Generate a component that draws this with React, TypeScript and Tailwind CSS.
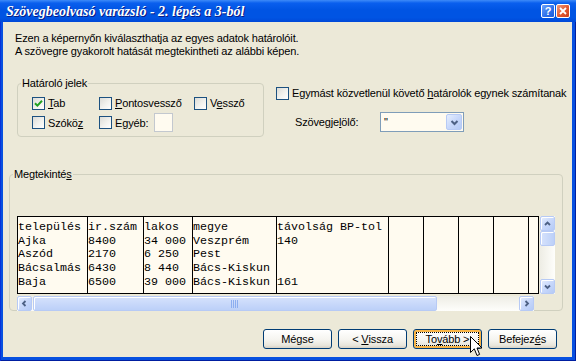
import React from "react";

const ui = "font-['Liberation_Sans',Arial,sans-serif] text-[11px] tracking-[-0.15px] text-black";

const U = ({ c }: { c: string }) => <span className="underline underline-offset-[1px]">{c}</span>;

const Box = ({ on }: { on?: boolean }) => (
  <span className="flex h-[13px] w-[13px] shrink-0 items-center justify-center border border-[#1C5180] bg-[linear-gradient(135deg,#DCDCD7_0%,#F2F2EE_55%,#FFFFFF_100%)]">
    {on && (
      <svg width="9" height="9" viewBox="0 0 9 9">
        <path d="M1 4.2 L3.4 6.6 L8 1.8" stroke="#21A121" strokeWidth="2" fill="none" />
      </svg>
    )}
  </span>
);

const arrows: Record<string, string> = {
  up: "M1 5 L3.5 2.5 L6 5",
  down: "M1 2.5 L3.5 5 L6 2.5",
  left: "M4.5 1 L2 3.5 L4.5 6",
  right: "M2.5 1 L5 3.5 L2.5 6",
};

const SBtn = ({ dir }: { dir: string }) => (
  <span className="flex h-[15px] w-[15px] shrink-0 items-center justify-center rounded-[2px] border border-[#B7CAF5] bg-[linear-gradient(135deg,#E6EEFD_0%,#C8D8FB_50%,#B4CAF6_100%)] shadow-[inset_1px_1px_0_#FFFFFF]">
    <svg width="7" height="7" viewBox="0 0 7 7">
      <path d={arrows[dir]} stroke="#4D6185" strokeWidth="1.8" fill="none" />
    </svg>
  </span>
);

const Grip = () => (
  <svg width="8" height="8" viewBox="0 0 8 8">
    {[0, 2, 4, 6].map((p) => (
      <line key={p} x1={p + 0.5} y1="0" x2={p + 0.5} y2="8" stroke="#8CAEF0" />
    ))}
  </svg>
);

const Btn = ({ children, hot }: { children: React.ReactNode; hot?: boolean }) => (
  <button
    className={`flex h-[20px] w-[69px] rounded-[3px] border border-[#003C74] bg-[linear-gradient(to_bottom,#FFFFFF_0%,#F5F4EF_55%,#E9E6DC_85%,#D7D1C5_100%)] p-[2px] ${ui} ${
      hot ? "shadow-[inset_0_0_0_2px_#F8B548]" : ""
    }`}
  >
    <span
      className={`flex flex-1 items-center justify-center whitespace-pre border border-dotted ${
        hot ? "border-black" : "border-transparent"
      }`}
    >
      {children}
    </span>
  </button>
);

const cols: { w: string; lines: string[] }[] = [
  { w: "w-[70px] border-r", lines: ["település", "Ajka", "Aszód", "Bácsalmás", "Baja"] },
  { w: "w-[56px] border-r", lines: ["ir.szám", "8400", "2170", "6430", "6500"] },
  { w: "w-[49px] border-r", lines: ["lakos", "34 000", "6 250", "8 440", "39 000"] },
  { w: "w-[84px] border-r", lines: ["megye", "Veszprém", "Pest", "Bács-Kiskun", "Bács-Kiskun"] },
  { w: "w-[112px] border-r", lines: ["távolság BP-tol", "140", "", "", "161"] },
  { w: "w-[35px] border-r", lines: [] },
  { w: "w-[35px] border-r", lines: [] },
  { w: "w-[35px] border-r", lines: [] },
  { w: "w-[35px] border-r", lines: [] },
  { w: "w-[9px]", lines: [] },
];

export default function App() {
  return (
    <div className="relative flex h-[361px] w-[576px] flex-col overflow-hidden bg-[#0750E0] shadow-[inset_1px_0_0_#0831D9,inset_-1px_0_0_#001EA0,inset_0_-1px_0_#001EA0]">
      {/* title bar */}
      <div className="flex h-[22px] shrink-0 items-center bg-[linear-gradient(to_bottom,#3E8BF8_0%,#0A5FEE_14%,#0054E3_45%,#0054E3_80%,#0048D8_100%)] pl-[6px] pr-[6px]">
        <span className="flex-1 font-['Liberation_Serif',serif] text-[14px] font-bold italic text-white [text-shadow:1px_1px_#0A1C83]">
          Szövegbeolvasó varázsló - 2. lépés a 3-ból
        </span>
        <span className="flex h-[14px] w-[14px] items-center justify-center rounded-[2px] border border-white bg-[linear-gradient(135deg,#6EA3FB_0%,#2C6FEA_60%,#1D5BD8_100%)] font-['Liberation_Sans',sans-serif] text-[11px] font-bold leading-none text-white">
          ?
        </span>
        <span className="ml-[1px] flex h-[14px] w-[14px] items-center justify-center rounded-[2px] border border-white bg-[linear-gradient(135deg,#F09A7C_0%,#E2582F_55%,#C8401E_100%)]">
          <svg width="8" height="8" viewBox="0 0 8 8">
            <path d="M1 1 L7 7 M7 1 L1 7" stroke="#FFFFFF" strokeWidth="1.8" />
          </svg>
        </span>
      </div>

      {/* body */}
      <div className="mb-[4px] ml-[3px] mr-[4px] flex flex-1 flex-col bg-[#ECE9D8]">
        <div className={`ml-[12px] mt-[10px] leading-[13px] ${ui}`}>
          <div>Ezen a képernyőn kiválaszthatja az egyes adatok határolóit.</div>
          <div>A szövegre gyakorolt hatását megtekintheti az alábbi képen.</div>
        </div>

        <div className="mt-[19px] flex items-start">
          <fieldset className="ml-[14px] h-[60px] w-[247px] rounded-[4px] border border-[#D0D0BF] px-[3px]">
            <legend className={`px-[1px] leading-[13px] ${ui} text-[#0046D5]`}>Határoló jelek</legend>
            <div className={`ml-[11px] mt-[7px] flex h-[13px] items-center ${ui}`}>
              <label className="flex w-[67px] items-center gap-[3px]">
                <Box on />
                <span>
                  <U c="T" />
                  ab
                </span>
              </label>
              <label className="flex w-[95px] items-center gap-[3px]">
                <Box />
                <span>
                  <U c="P" />
                  ontosvessző
                </span>
              </label>
              <label className="flex items-center gap-[3px]">
                <Box />
                <span>
                  V<U c="e" />
                  ssző
                </span>
              </label>
            </div>
            <div className={`ml-[11px] mt-[3px] flex h-[19px] items-end ${ui}`}>
              <label className="mb-[1px] flex w-[67px] items-center gap-[3px]">
                <Box />
                <span>
                  Szókö
                  <U c="z" />
                </span>
              </label>
              <label className="flex items-end gap-[3px]">
                <span className="mb-[1px] flex items-center gap-[3px]">
                  <Box />
                  <span>
                    E<U c="g" />
                    yéb:
                  </span>
                </span>
                <span className="ml-[3px] h-[19px] w-[19px] border border-[#C3C8CF] bg-[#FFFBF0]" />
              </label>
            </div>
          </fieldset>

          <div className={`ml-[12px] pt-[10px] ${ui}`}>
            <label className="flex h-[13px] items-center gap-[3px]">
              <Box />
              <span>
                Egymást közvetlenül követő <U c="h" />
                atárolók egynek számítanak
              </span>
            </label>
            <div className="mt-[12px] flex items-center pl-[19px]">
              <span className="w-[85px]">
                Szövegje
                <U c="l" />
                ölő:
              </span>
              <span className="flex h-[20px] w-[84px] items-center border border-[#7F9DB9] bg-[#FFFBF0] p-[1px]">
                <span className="flex-1 pl-[2px] leading-none">"</span>
                <span className="flex h-[16px] w-[16px] items-center justify-center rounded-[2px] border border-[#B7CAF5] bg-[linear-gradient(135deg,#E6EEFD_0%,#C8D8FB_50%,#B4CAF6_100%)]">
                  <svg width="9" height="7" viewBox="0 0 9 7">
                    <path d="M1.5 2 L4.5 5 L7.5 2" stroke="#4D6185" strokeWidth="2" fill="none" />
                  </svg>
                </span>
              </span>
            </div>
          </div>
        </div>

        <fieldset className="ml-[6px] mt-[31px] h-[143px] w-[554px] rounded-[4px] border border-[#D0D0BF] px-[3px]">
          <legend className={`px-[1px] leading-[13px] ${ui} text-[#0046D5]`}>
            Megtekinté
            <U c="s" />
          </legend>
          <div className="ml-[4px] mt-[35px] w-[538px]">
            <div className="flex items-stretch">
              <div className="flex h-[78px] w-[522px] border border-black bg-[#FFFBF0] font-['Liberation_Mono',monospace] text-[11.67px] leading-[13.7px] text-black">
                {cols.map((c, i) => (
                  <div key={i} className={`h-full pt-[4px] ${c.w} shrink-0 overflow-hidden whitespace-pre border-black`}>
                    {c.lines.map((l, j) => (
                      <div key={j} className="h-[13.7px]">
                        {l}
                      </div>
                    ))}
                  </div>
                ))}
              </div>
              <div className="ml-[1px] flex h-[78px] w-[15px] flex-col bg-[linear-gradient(to_right,#EEEDE5,#FEFEFB)]">
                <SBtn dir="up" />
                <span className="flex h-[15px] items-center justify-center rounded-[2px] border border-[#B7CAF5] bg-[linear-gradient(to_right,#D6E2FC,#BCD0F8)] shadow-[inset_1px_1px_0_#FFFFFF]" />
                <span className="flex-1" />
                <SBtn dir="down" />
              </div>
            </div>
            <div className="mt-[2px] flex h-[15px] w-[517px] bg-[linear-gradient(to_bottom,#EEEDE5,#FEFEFB)]">
              <SBtn dir="left" />
              <span className="ml-[1px] flex w-[404px] items-center justify-center rounded-[2px] border border-[#B7CAF5] bg-[linear-gradient(to_bottom,#D6E2FC,#BCD0F8)] shadow-[inset_1px_1px_0_#FFFFFF]">
                <Grip />
              </span>
              <span className="flex-1" />
              <SBtn dir="right" />
            </div>
          </div>
        </fieldset>

        <div className="mr-[15px] mt-[18px] flex justify-end gap-[6px]">
          <Btn>Mégse</Btn>
          <Btn>
            {"< "}
            <U c="V" />
            issza
          </Btn>
          <Btn hot>
            To
            <U c="v" />
            {"ább >"}
          </Btn>
          <Btn>
            Befejez
            <U c="é" />s
          </Btn>
        </div>
      </div>

      {/* mouse pointer */}
      <svg className="absolute left-[470px] top-[336px]" width="13" height="21" viewBox="0 0 13 21">
        <path d="M0.5 0.5 L0.5 16.5 L4.3 12.8 L7 19.5 L9.6 18.4 L7 12 L12 12 Z" fill="#FFFFFF" stroke="#000000" strokeWidth="1" />
      </svg>
    </div>
  );
}
